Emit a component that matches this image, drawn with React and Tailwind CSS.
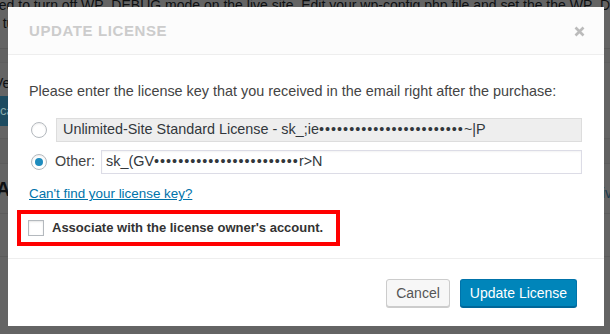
import React, { useState } from "react";

function Radio({ checked }) {
  return (
    <span className="flex h-[16px] w-[16px] shrink-0 items-center justify-center rounded-full border border-[#b4b9be] bg-white shadow-[inset_0_1px_2px_rgba(0,0,0,0.07)]">
      {checked && <span className="h-[8px] w-[8px] rounded-full bg-[#1e8cbe]" />}
    </span>
  );
}

function Backdrop() {
  return (
    <div className="flex h-full w-full flex-col text-[14px] text-[#0e1012]">
      <div className="-mt-[4px] h-[52px] whitespace-nowrap leading-[18px] -ml-[9px]">
        <p>ded to turn off WP_DEBUG mode on the live site. Edit your wp-config.php file and set the the WP_DEBUG</p>
        <p>e ture to false before you go live and make sure to review your site configuration settings ig</p>
      </div>
      <div className="h-[14px] border-t border-[#5a5a5a] bg-[#626262]" />
      <div className="flex h-[76px] flex-col justify-between border-t border-[#5e5e5e] pt-[12px] pb-[12px]">
        <p className="-ml-[6px] leading-[16px]">Version</p>
        <div className="h-[30px] w-[14px] bg-[#1d4b60] text-[13px] leading-[30px] text-[#8aa]">ca</div>
      </div>
      <div className="h-[25px] border-t border-[#5c5c5c] bg-[#616161]" />
      <div className="flex h-[50px] items-center justify-between border-t border-[#5c5c5c]">
        <span className="-ml-[4px] text-[20px] font-bold">A</span>
        <span className="-mr-[2px] mt-[10px] text-[#1c3a4c]">iv</span>
      </div>
      <div className="h-[43px] border-t border-[#5c5c5c]" />
      <div className="flex-1 border-t border-[#5c5c5c]" />
    </div>
  );
}

export default function App() {
  const [choice] = useState("other");
  const dots = "\u2022".repeat(24);

  return (
    <div className="relative h-[334px] w-[610px] overflow-hidden bg-[#646464] font-['Liberation_Sans',Arial,sans-serif]">
      <Backdrop />

      <div className="absolute left-[8px] top-[7px] flex h-[319px] w-[596px] flex-col bg-white">
        <div className="flex h-[48px] shrink-0 items-center justify-between border-b border-[#eeeeee] bg-[#fcfcfc] pl-[21px] pr-[19px]">
          <h1 className="pt-[1px] text-[15px] font-bold tracking-[0.6px] text-[#cccccc]">UPDATE LICENSE</h1>
          <svg width="11" height="11" viewBox="0 0 11 11" className="mt-[2px]">
            <path d="M1.5 1.5 L9.5 9.5 M9.5 1.5 L1.5 9.5" stroke="#bbbbbb" strokeWidth="2.6" />
          </svg>
        </div>

        <div className="flex h-[203px] shrink-0 flex-col pl-[21px] pr-[22px] pt-[26px]">
          <p className="whitespace-nowrap text-[14.4px] leading-[20px] text-[#444444]">
            Please enter the license key that you received in the email right after the purchase:
          </p>

          <div className="mt-[17px] flex items-center">
            <span className="ml-[2px]"><Radio checked={choice === "site"} /></span>
            <div className="ml-[9px] flex h-[24px] flex-1 items-center whitespace-nowrap border border-[#dddddd] bg-[#eeeeee] pl-[6px] text-[14.4px] text-[#32373c]">
              Unlimited-Site Standard License - sk_;ie<span className="tracking-[1px]">{dots}</span>~|P
            </div>
          </div>

          <div className="mt-[8px] flex items-center">
            <span className="ml-[2px]"><Radio checked={choice === "other"} /></span>
            <span className="ml-[8px] text-[14.4px] text-[#444444]">Other:</span>
            <div className="ml-[6px] flex h-[24px] flex-1 items-center whitespace-nowrap border border-[#dcdce6] bg-white pl-[4px] text-[14.4px] text-[#32373c] shadow-[inset_0_1px_2px_rgba(0,0,0,0.05)]">
              sk_(GV<span className="tracking-[1px]">{dots}</span>r&gt;N
            </div>
          </div>

          <a href="#" className="mt-[11px] self-start text-[13.4px] leading-[18px] text-[#0073aa] underline">
            Can't find your license key?
          </a>

          <div className="-ml-[12px] mt-[7px] flex h-[36px] w-[323px] items-center border-4 border-[#ff0000] pl-[7px]">
            <span className="h-[16px] w-[16px] shrink-0 border border-[#b4b9be] bg-white shadow-[inset_0_1px_2px_rgba(0,0,0,0.1)]" />
            <span className="ml-[8px] whitespace-nowrap text-[13px] font-bold text-[#333333]">
              Associate with the license owner's account.
            </span>
          </div>
        </div>

        <div className="flex flex-1 items-start justify-end gap-[10px] border-t border-[#eeeeee] pr-[27px] pt-[20px]">
          <button className="h-[28px] w-[64px] rounded-[3px] border border-[#cccccc] bg-[#f7f7f7] text-[14px] text-[#555555] shadow-[0_1px_0_#cccccc]">
            Cancel
          </button>
          <button className="h-[28px] w-[117px] rounded-[3px] border border-[#0073aa] border-b-[#006799] bg-[#0085ba] text-[14px] text-white shadow-[0_1px_0_#006799]">
            Update License
          </button>
        </div>
      </div>
    </div>
  );
}
